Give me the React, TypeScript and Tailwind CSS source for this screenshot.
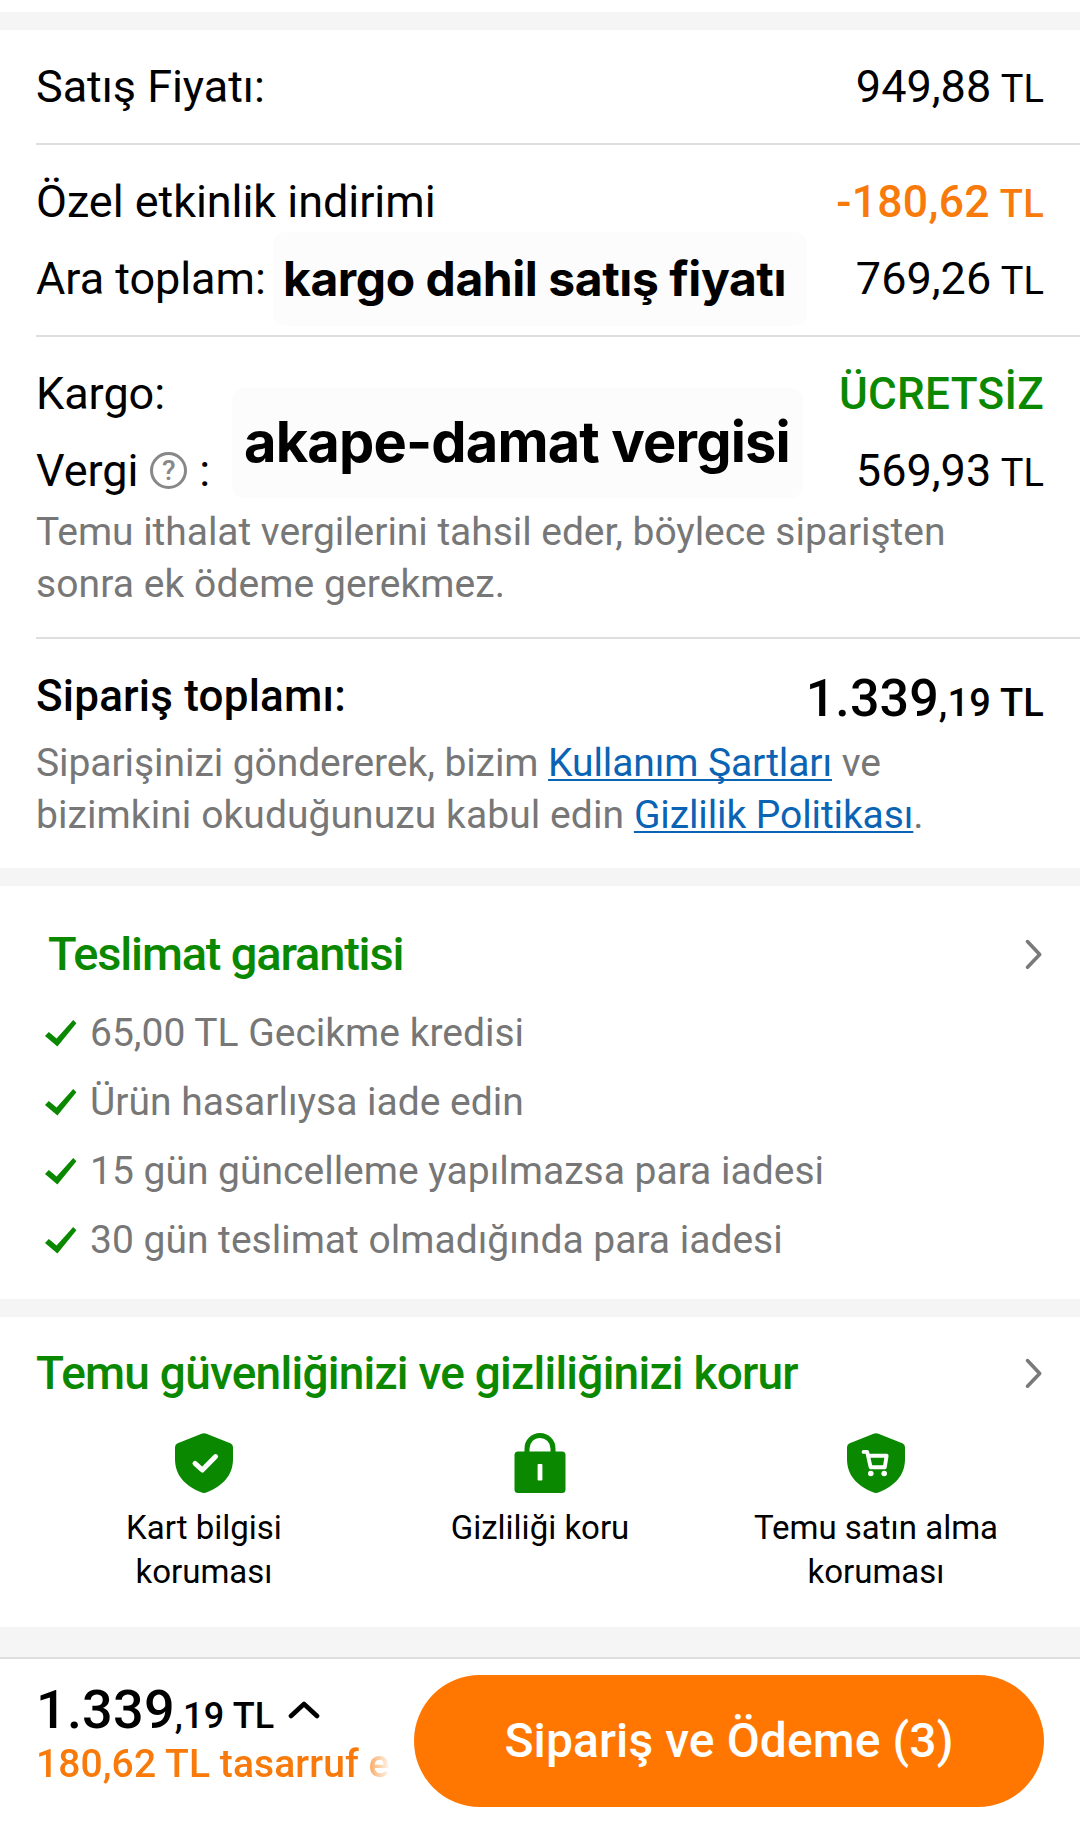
import type { ReactNode } from "react";

const guarantees = [
  "65,00 TL Gecikme kredisi",
  "Ürün hasarlıysa iade edin",
  "15 gün güncelleme yapılmazsa para iadesi",
  "30 gün teslimat olmadığında para iadesi",
];

const protections = [
  { label: "Kart bilgisi koruması", icon: <CardShieldIcon /> },
  { label: "Gizliliği koru", icon: <LockIcon /> },
  { label: "Temu satın alma koruması", icon: <CartShieldIcon /> },
];

const SHIELD =
  "M26.6 .8Q29-.4 31.4.8L55.3 10.2Q58 11.4 58 14.2V26C58 42.5 47.5 53 32 59.3Q29 60.6 26 59.3C10.5 53 0 42.5 0 26V14.2Q0 11.4 2.7 10.2Z";

function CardShieldIcon() {
  return (
    <svg width="58" height="60" viewBox="0 0 58 60" fill="none">
      <path d={SHIELD} fill="#0a8800" />
      <path
        d="M20 30.4L27.3 37L40.6 23.6"
        stroke="white"
        strokeWidth="5"
        strokeLinecap="round"
        strokeLinejoin="round"
      />
    </svg>
  );
}

function CartShieldIcon() {
  return (
    <svg width="58" height="60" viewBox="0 0 58 60" fill="none">
      <path d={SHIELD} fill="#0a8800" />
      <path
        d="M16.6 18.9H20.2L23.6 34.2H37.8L39.6 22.8H21.4"
        stroke="white"
        strokeWidth="3.9"
        strokeLinecap="round"
        strokeLinejoin="round"
      />
      <circle cx="23.8" cy="40.5" r="2.8" fill="white" />
      <circle cx="37.2" cy="40.5" r="2.8" fill="white" />
    </svg>
  );
}

function LockIcon() {
  return (
    <svg width="52" height="60" viewBox="0 0 52 60" fill="none">
      <path
        d="M13 22V15.6C13 8.4 18.8 2.5 26 2.5S39 8.4 39 15.6V22"
        stroke="#0a8800"
        strokeWidth="5"
      />
      <rect x=".5" y="18.6" width="51" height="41.4" rx="3.5" fill="#0a8800" />
      <rect x="23.6" y="31" width="4.8" height="16.5" rx=".8" fill="white" />
    </svg>
  );
}

function CheckIcon() {
  return (
    <svg width="32" height="27" viewBox="0 0 32 27">
      <path d="M0 16L3.8 12L11.6 18.4L28.2 0L31.4 3.2L12.4 26.6Z" fill="#0a8800" />
    </svg>
  );
}

function ChevronRight() {
  return (
    <svg width="20" height="32" viewBox="0 0 20 32" fill="none">
      <path
        d="M3.5 3.6L15.7 16.4L3.5 29.2"
        stroke="#7a7a7a"
        strokeWidth="3.6"
        strokeLinecap="round"
        strokeLinejoin="round"
      />
    </svg>
  );
}

function Row({ label, children }: { label: ReactNode; children: ReactNode }) {
  return (
    <div className="flex items-start justify-between pr-9 text-[45px] leading-[57px] text-black">
      <div className="flex items-center tracking-[-0.05px]">{label}</div>
      <div className="whitespace-nowrap">{children}</div>
    </div>
  );
}

function Amount({ value }: { value: string }) {
  return (
    <>
      {value}
      <span className="ml-px text-[38px] leading-none"> TL</span>
    </>
  );
}

function Divider() {
  return <div className="my-7 h-0.5 bg-[#dedede]" />;
}

function Gap() {
  return <div className="h-[18px] bg-[#f5f5f5]" />;
}

function LegalLink({ children }: { children: ReactNode }) {
  return (
    <a className="text-[#0b63b4] underline decoration-2 underline-offset-[3px] tracking-[-0.1px] [text-decoration-skip-ink:none]">
      {children}
    </a>
  );
}

export default function App() {
  return (
    <main className="h-[1843px] w-[1080px] overflow-hidden bg-white font-['Roboto',sans-serif]">
      <div className="h-3" />
      <Gap />

      <section className="relative h-[838px] pl-9 pt-7">
        <Row label="Satış Fiyatı:">
          <Amount value="949,88" />
        </Row>

        <Divider />

        <Row label="Özel etkinlik indirimi">
          <span className="text-[44.5px] font-medium leading-none tracking-[0.3px] text-[#f77a0b]">
            <Amount value="-180,62" />
          </span>
        </Row>
        <div className="mt-5">
          <Row label="Ara toplam:">
            <Amount value="769,26" />
          </Row>
        </div>

        <Divider />

        <Row label="Kargo:">
          <span className="text-[44px] font-medium leading-none tracking-[0.3px] text-[#0a8800]">
            ÜCRETSİZ
          </span>
        </Row>
        <div className="mt-5">
          <Row
            label={
              <>
                Vergi
                <span className="mx-[12px] flex h-[37px] w-[37px] items-center justify-center rounded-full border-[3px] border-[#888888] text-[28px] font-medium leading-none text-[#888888]">
                  ?
                </span>
                :
              </>
            }
          >
            <Amount value="569,93" />
          </Row>
        </div>
        <p className="mb-[27px] mt-[7px] text-[39px] leading-[52px] text-[#777777]">
          <span className="tracking-[-0.05px]">
            Temu ithalat vergilerini tahsil eder, böylece siparişten
          </span>
          <br />
          <span className="tracking-[0.08px]">sonra ek ödeme gerekmez.</span>
        </p>
        <div className="mb-[29px] h-0.5 bg-[#dedede]" />

        <div className="flex h-[62px] items-start justify-between pr-9 font-medium text-black">
          <span className="text-[44px] leading-[57px] tracking-[0.2px]">Sipariş toplamı:</span>
          <span className="text-[52px] leading-[62px] tracking-[0.1px]">
            1.339
            <span className="text-[38px] leading-none tracking-[0.2px]">,19 TL</span>
          </span>
        </div>
        <p className="mt-[7px] text-[39px] leading-[52px] text-[#777777]">
          <span className="tracking-[-0.07px]">Siparişinizi göndererek, bizim </span>
          <LegalLink>Kullanım Şartları</LegalLink> ve
          <br />
          <span className="tracking-[0.08px]">bizimkini okuduğunuzu kabul edin </span>
          <LegalLink>Gizlilik Politikası</LegalLink>.
        </p>

        {/* captions laid over the summary */}
        <div className="absolute left-[273px] top-[202px] h-[94px] w-[534px] whitespace-nowrap rounded-xl bg-[#fcfcfc] pl-2.5 font-['Inter',sans-serif] text-[48px] font-bold leading-[93px] tracking-[-0.44px] text-black">
          kargo dahil satış fiyatı
        </div>
        <div className="absolute left-[232px] top-[358px] h-[110px] w-[571px] whitespace-nowrap rounded-xl bg-[#fcfcfc] pl-3 font-['Inter',sans-serif] text-[56px] font-bold leading-[108px] tracking-[-0.85px] text-black">
          akape-damat vergisi
        </div>
      </section>

      <Gap />

      <section className="h-[413px] pt-[38px]">
        <div className="flex items-center justify-between pl-12 pr-9">
          <h2 className="text-[47px] font-medium leading-[60px] tracking-[-1.18px] text-[#0a8800]">
            Teslimat garantisi
          </h2>
          <ChevronRight />
        </div>
        <ul className="mt-[15px] pl-[45px]">
          {guarantees.map((item) => (
            <li
              key={item}
              className="flex items-center gap-[13px] text-[39px] leading-[69px] text-[#777777]"
            >
              <CheckIcon />
              {item}
            </li>
          ))}
        </ul>
      </section>

      <Gap />

      <section className="h-[310px] px-9 pt-7">
        <div className="flex items-center justify-between">
          <h2 className="text-[46px] font-medium leading-[56px] tracking-[-0.76px] text-[#0a8800]">
            Temu güvenliğinizi ve gizliliğinizi korur
          </h2>
          <ChevronRight />
        </div>
        <div className="mt-8 grid grid-cols-3">
          {protections.map((item) => (
            <div key={item.label} className="flex flex-col items-center">
              {item.icon}
              <p className="mt-[13px] max-w-[256px] text-center text-[33px] leading-[44px] text-black">
                {item.label}
              </p>
            </div>
          ))}
        </div>
      </section>

      <div className="h-[30px] bg-[#f5f5f5]" />

      <footer className="flex h-[186px] items-start justify-between border-t-2 border-[#dedede] px-9">
        <div className="pt-5">
          <div className="flex h-[61px] items-baseline whitespace-nowrap text-[54px] font-medium leading-[61px] tracking-[0.2px] text-black">
            1.339
            <span className="text-[36px] leading-none">,19 TL</span>
            <svg className="ml-3.5 mt-px self-center" width="32" height="18" viewBox="0 0 32 18" fill="none">
              <path
                d="M3 15L16 3L29 15"
                stroke="black"
                strokeWidth="4.6"
                strokeLinecap="round"
                strokeLinejoin="round"
              />
            </svg>
          </div>
          {/* savings line fades out before the button */}
          <p className="w-[356px] whitespace-nowrap text-[39px] font-medium leading-[49px] tracking-[0.1px] text-[#f77a0b] [mask-image:linear-gradient(to_right,black_90%,transparent)]">
            180,62 TL tasarruf e
          </p>
        </div>
        <button className="mt-4 h-[132px] w-[630px] shrink-0 rounded-full bg-[#ff7700] text-[48px] font-medium tracking-[0.1px] text-white">
          Sipariş ve Ödeme (3)
        </button>
      </footer>
    </main>
  );
}
